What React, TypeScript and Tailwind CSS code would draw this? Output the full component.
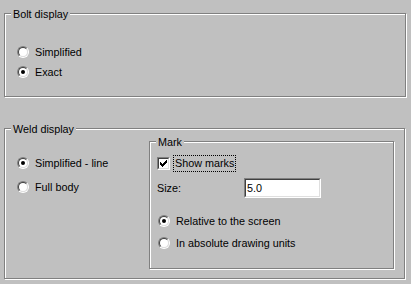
import React from "react";

function Radio({ checked }: { checked?: boolean }) {
  return (
    <div className="w-[12px] h-[12px] shrink-0 rounded-full border border-t-[#808080] border-l-[#808080] border-r-white border-b-white">
      <div className="w-full h-full rounded-full border border-t-[#404040] border-l-[#404040] border-r-[#dfdfdf] border-b-[#dfdfdf] bg-white flex items-center justify-center">
        {checked ? <div className="w-[4px] h-[4px] rounded-full bg-black" /> : null}
      </div>
    </div>
  );
}

function Checkbox({ checked }: { checked?: boolean }) {
  return (
    <div className="w-[13px] h-[13px] shrink-0 border border-t-[#808080] border-l-[#808080] border-r-white border-b-white">
      <div className="w-full h-full border border-t-[#404040] border-l-[#404040] border-r-[#dfdfdf] border-b-[#dfdfdf] bg-white flex items-center justify-center">
        {checked ? (
          <svg width="7" height="7" viewBox="0 0 7 7" shapeRendering="crispEdges">
            <path
              d="M6 0h1v3h-1zM5 1h1v3h-1zM4 2h1v3h-1zM3 3h1v3h-1zM2 4h1v3h-1zM1 3h1v3h-1zM0 2h1v3h-1z"
              fill="#000"
            />
          </svg>
        ) : null}
      </div>
    </div>
  );
}

function Caption({ children }: { children: React.ReactNode }) {
  return (
    <div className="absolute left-[6px] top-[-6px] px-[2px] bg-[#c0c0c0] leading-[13px]">
      {children}
    </div>
  );
}

function RadioRow({
  checked,
  label,
  h,
}: {
  checked?: boolean;
  label: string;
  h: string;
}) {
  return (
    <div className={`flex items-center ${h}`}>
      <Radio checked={checked} />
      <span className="ml-[6px] leading-[13px]">{label}</span>
    </div>
  );
}

export default function App() {
  return (
    <div
      className="w-[411px] h-[284px] bg-[#c0c0c0] text-black text-[10.8px] pl-[4px] pt-[13px] flex flex-col"
      style={{ fontFamily: '"Liberation Sans", Arial, sans-serif' }}
    >
      {/* Bolt display */}
      <div className="relative w-[402px] h-[84px] border border-[#808080] shadow-[inset_1px_1px_0_#fff,1px_1px_0_#fff] pl-[12px] pt-[28px]">
        <Caption>Bolt display</Caption>
        <RadioRow label="Simplified" h="h-[20px]" />
        <RadioRow label="Exact" checked h="h-[20px]" />
      </div>

      {/* Weld display */}
      <div className="relative mt-[31px] w-[401px] h-[151px] border border-[#808080] shadow-[inset_1px_1px_0_#fff,1px_1px_0_#fff] flex">
        <Caption>Weld display</Caption>
        <div className="w-[144px] pl-[12px] pt-[22px]">
          <RadioRow label="Simplified - line" checked h="h-[24px]" />
          <RadioRow label="Full body" h="h-[24px]" />
        </div>
        <div className="relative mt-[12px] w-[245px] h-[128px] border border-[#808080] shadow-[inset_1px_1px_0_#fff,1px_1px_0_#fff] pl-[7px] pt-[12px]">
          <Caption>Mark</Caption>
          <div className="flex items-center h-[18px]">
            <Checkbox checked />
            <div className="ml-[3px] h-[17px] flex items-center border border-dotted border-black pl-[1px] pr-[1px] leading-[13px]">
              Show marks
            </div>
          </div>
          <div className="mt-[6px] flex items-center h-[20px]">
            <span className="w-[87px] leading-[13px]">Size:</span>
            <div className="w-[77px] h-[20px] border border-t-[#808080] border-l-[#808080] border-r-white border-b-white">
              <div className="w-full h-full border border-t-[#404040] border-l-[#404040] border-r-[#dfdfdf] border-b-[#dfdfdf] bg-white flex items-center pl-[1px] leading-[13px]">
                5.0
              </div>
            </div>
          </div>
          <div className="mt-[12px] pl-[1px]">
            <RadioRow label="Relative to the screen" checked h="h-[22px]" />
            <RadioRow label="In absolute drawing units" h="h-[22px]" />
          </div>
        </div>
      </div>
    </div>
  );
}
